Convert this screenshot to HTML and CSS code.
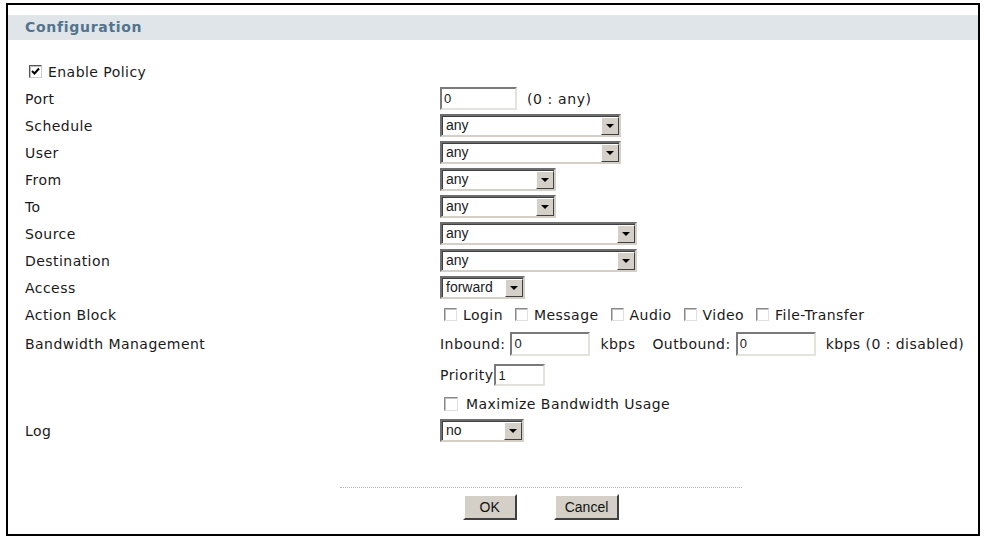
FILE: index.html
```html
<!DOCTYPE html>
<html lang="en">
<head>
  <meta charset="UTF-8">
  <title>Policy Configuration</title>
  <link rel="stylesheet" href="styles.css">
</head>
<body>

<div class="frame">
  <div class="section-title">Configuration</div>

  <form class="policy">
    <div class="row">
      <label class="check wide"><span class="box checked"><svg viewBox="0 0 9 9" width="9" height="9"><path d="M1 4 L3.5 6.5 L8 1.5" fill="none" stroke="#000" stroke-width="2"/></svg></span>Enable Policy</label>
    </div>

    <div class="row">
      <div class="label">Port</div>
      <div class="field"><span class="text port">0</span><span class="hint">(0 : any)</span></div>
    </div>
    <div class="row">
      <div class="label">Schedule</div>
      <div class="field"><span class="select w181">any<i class="arrow"></i></span></div>
    </div>
    <div class="row">
      <div class="label">User</div>
      <div class="field"><span class="select w181">any<i class="arrow"></i></span></div>
    </div>
    <div class="row">
      <div class="label">From</div>
      <div class="field"><span class="select w116">any<i class="arrow"></i></span></div>
    </div>
    <div class="row">
      <div class="label">To</div>
      <div class="field"><span class="select w116">any<i class="arrow"></i></span></div>
    </div>
    <div class="row">
      <div class="label">Source</div>
      <div class="field"><span class="select w197">any<i class="arrow"></i></span></div>
    </div>
    <div class="row">
      <div class="label">Destination</div>
      <div class="field"><span class="select w197">any<i class="arrow"></i></span></div>
    </div>
    <div class="row">
      <div class="label">Access</div>
      <div class="field"><span class="select w85">forward<i class="arrow"></i></span></div>
    </div>
    <div class="row">
      <div class="label">Action Block</div>
      <div class="field checks">
        <label class="check"><span class="box"></span>Login</label>
        <label class="check"><span class="box"></span>Message</label>
        <label class="check"><span class="box"></span>Audio</label>
        <label class="check"><span class="box"></span>Video</label>
        <label class="check"><span class="box"></span>File-Transfer</label>
      </div>
    </div>
    <div class="row tall">
      <div class="label">Bandwidth Management</div>
      <div class="field bw">
        <span>Inbound:</span><span class="text rate">0</span><span class="unit">kbps</span>
        <span>Outbound:</span><span class="text rate">0</span><span class="unit">kbps (0 : disabled)</span>
      </div>
    </div>
    <div class="row tall">
      <div class="label"></div>
      <div class="field"><span>Priority</span><span class="text prio">1</span></div>
    </div>
    <div class="row">
      <div class="label"></div>
      <div class="field"><label class="check big"><span class="box"></span>Maximize Bandwidth Usage</label></div>
    </div>
    <div class="row">
      <div class="label">Log</div>
      <div class="field"><span class="select w84">no<i class="arrow"></i></span></div>
    </div>

    <div class="actions">
      <button type="button" class="btn ok">OK</button>
      <button type="button" class="btn">Cancel</button>
    </div>
  </form>
</div>

</body>
</html>
```

FILE: styles.css
```css
body {
  margin: 0;
  background: #fff;
  font-family: "DejaVu Sans", Verdana, sans-serif;
  font-size: 14px;
  letter-spacing: 0.45px;
  color: #1a1a1a;
}
.frame {
  box-sizing: border-box;
  width: 974px;
  height: 533px;
  margin: 3px 0 0 6px;
  border: 2px solid #000;
}
.section-title {
  margin-top: 10px;
  height: 25px;
  line-height: 25px;
  padding-left: 17px;
  background: #dfe5e8;
  color: #53738e;
  font-weight: bold;
  letter-spacing: 0.7px;
}
.policy {
  padding: 18px 0 0 17px;
}
.row {
  display: grid;
  grid-template-columns: 415px 1fr;
  align-items: center;
  height: 27px;
}
.row.tall {
  height: 31px;
}
.label {
  white-space: nowrap;
}
.field {
  display: flex;
  align-items: center;
  white-space: nowrap;
}
.wide {
  grid-column: 1 / 3;
}

/* sunken text box */
.text {
  box-sizing: border-box;
  display: inline-block;
  height: 23px;
  line-height: 19px;
  padding-left: 2px;
  border: 2px solid;
  border-color: #7a7a7a #e4e2dc #e4e2dc #7a7a7a;
  font-family: "Liberation Sans", Arial, sans-serif;
  font-size: 13px;
  letter-spacing: 0;
  background: #fff;
}
.port { width: 77px; margin-right: 10px; }
.rate { width: 80px; height: 24px; margin: 0 10px 0 5px; }
.prio { width: 51px; height: 22px; margin-left: 1px; }
.hint { letter-spacing: 0.6px; }
.unit { margin-right: 17px; }

/* drop-down list */
.select {
  box-sizing: border-box;
  position: relative;
  display: inline-block;
  height: 23px;
  line-height: 19px;
  padding-left: 4px;
  border: 2px solid;
  border-color: #6e6e6e #d4d0c8 #d4d0c8 #6e6e6e;
  box-shadow: inset 1px 1px 0 #404040;
  font-family: "Liberation Sans", Arial, sans-serif;
  font-size: 14px;
  letter-spacing: 0;
  background: #fff;
}
.w181 { width: 181px; }
.w116 { width: 116px; }
.w197 { width: 197px; }
.w85 { width: 85px; }
.w84 { width: 84px; }
.arrow {
  box-sizing: border-box;
  position: absolute;
  top: 1px;
  right: 0;
  width: 18px;
  height: 18px;
  background: #d4d0c8;
  border-top: 1px solid #fff;
  border-left: 1px solid #fff;
  border-right: 1px solid #404040;
  border-bottom: 1px solid #404040;
}
.arrow::after {
  content: "";
  position: absolute;
  left: 4px;
  top: 6px;
  border-left: 4px solid transparent;
  border-right: 4px solid transparent;
  border-top: 4px solid #000;
}

/* check boxes */
.check {
  display: inline-flex;
  align-items: center;
}
.box {
  box-sizing: border-box;
  display: inline-flex;
  align-items: center;
  justify-content: center;
  width: 13px;
  height: 13px;
  margin: 0 6px 0 4px;
  border: 1px solid;
  border-color: #8a8a8a #e0e0e0 #e0e0e0 #8a8a8a;
  box-shadow: inset 1px 1px 0 #c0c0c0;
  background: #fff;
}
.box.checked {
  border-color: #555 #ccc #ccc #555;
}
.checks .check {
  margin-right: 8px;
}
.big .box {
  width: 14px;
  height: 14px;
  margin-right: 8px;
}

/* button bar */
.actions {
  display: flex;
  justify-content: center;
  gap: 37px;
  width: 402px;
  margin: 43px 0 0 315px;
  padding-top: 6px;
  border-top: 1px dotted #b8b8b8;
}
.btn {
  height: 26px;
  padding: 0 9px;
  background: #d4d0c8;
  border: 2px solid;
  border-color: #fff #404040 #404040 #fff;
  font-family: "Liberation Sans", Arial, sans-serif;
  font-size: 14px;
  color: #111;
}
.btn.ok {
  width: 54px;
}
```
